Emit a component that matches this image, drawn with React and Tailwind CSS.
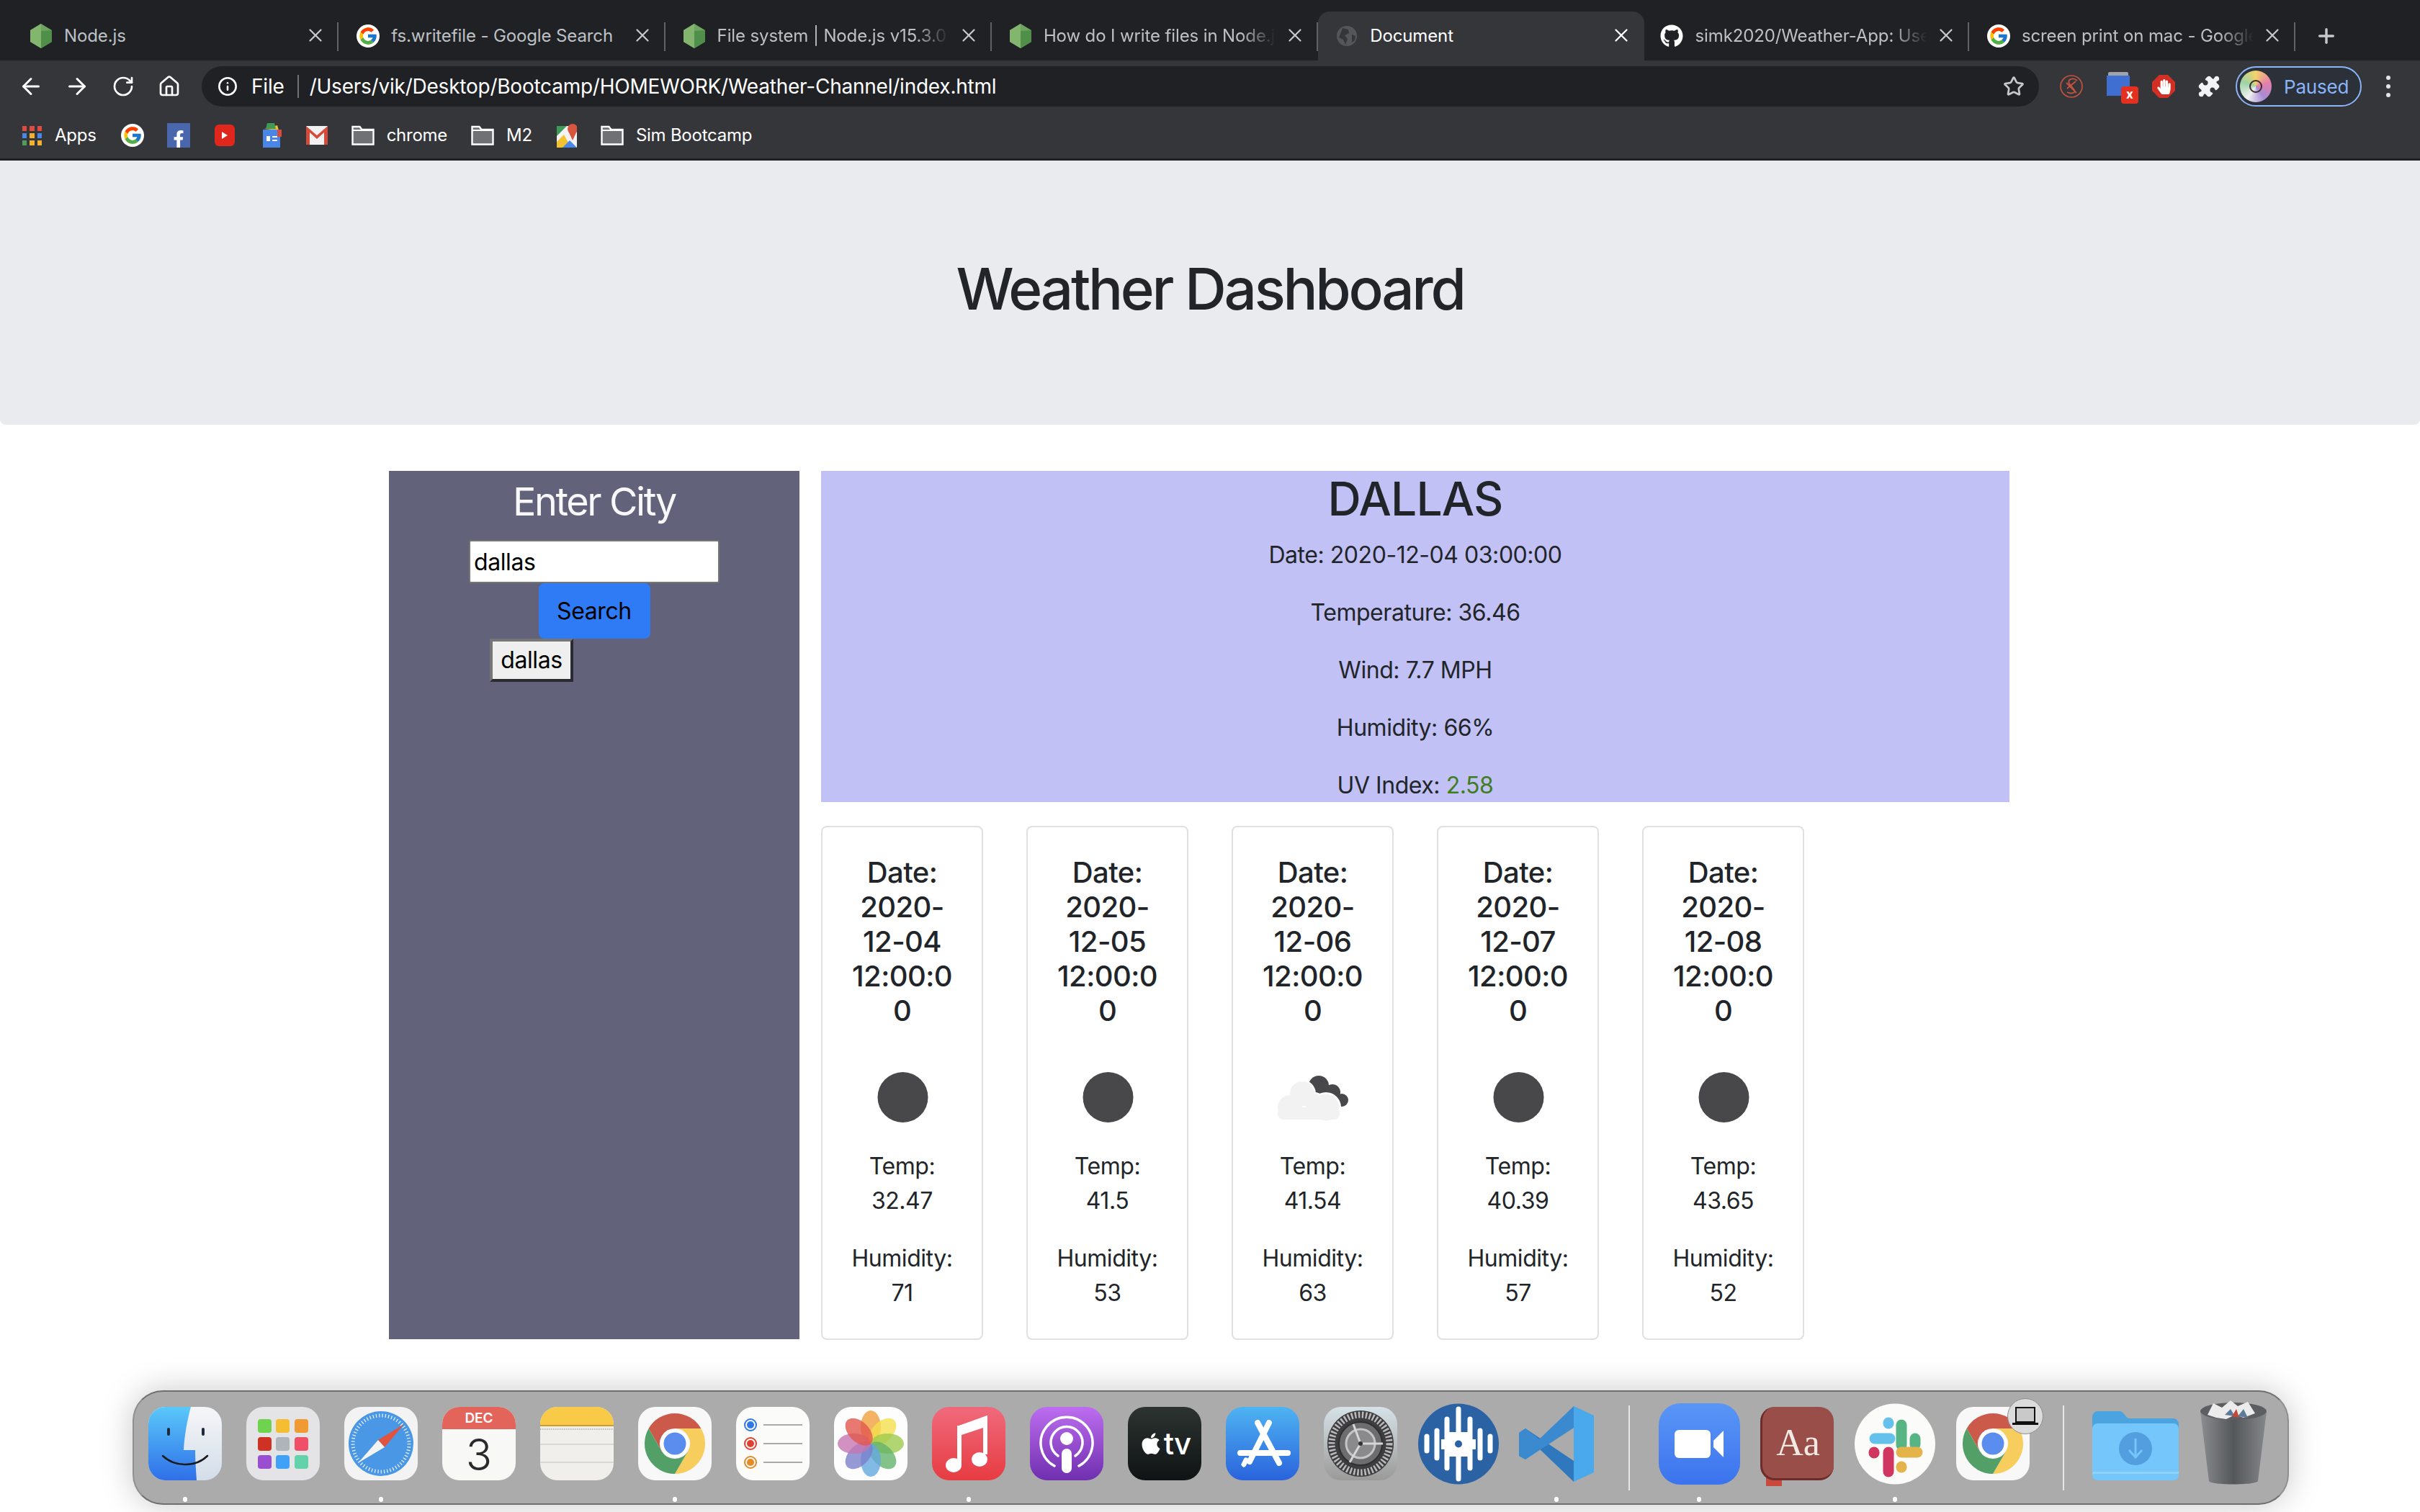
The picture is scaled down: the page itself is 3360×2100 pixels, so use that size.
import { ArrowLeft, ArrowRight, RotateCw, Home, Info, Star, X, Plus, Puzzle } from 'lucide-react';
import { FcGoogle } from 'react-icons/fc';
import { FaGithub, FaFacebookF, FaApple, FaHandPaper } from 'react-icons/fa';

const tabs = [
    { title: 'Node.js', icon: 'node', width: 'w-[453.3px]' },
    { title: 'fs.writefile - Google Search', icon: 'google', width: 'w-[453.3px]' },
    { title: 'File system | Node.js v15.3.0', icon: 'node', fade: true, width: 'w-[453.3px]' },
    { title: 'How do I write files in Node.js', icon: 'node', fade: true, width: 'w-[453.3px]' },
    { title: 'Document', icon: 'globe', active: true, width: 'w-[453.3px]' },
    { title: 'simk2020/Weather-App: Use', icon: 'github', fade: true, width: 'w-[450.4px]' },
    { title: 'screen print on mac - Google', icon: 'google', fade: true, width: 'w-[453.3px]' },
];

const forecast = [
    { date: '12-04', temp: '32.47', humidity: '71' },
    { date: '12-05', temp: '41.5', humidity: '53' },
    { date: '12-06', temp: '41.54', humidity: '63', cloudy: true },
    { date: '12-07', temp: '40.39', humidity: '57' },
    { date: '12-08', temp: '43.65', humidity: '52' },
];

function NodeIcon() {
    return (
        <svg viewBox="0 0 30 34" className="w-[30px] h-[34px] shrink-0">
            <polygon points="15,0 30,9 30,25 15,34 0,25 0,9" fill="#6da55f" />
            <polygon points="15,0 15,34 0,25 0,9" fill="#83b56f" />
            <polygon points="15,10 30,9 30,25 15,34" fill="#4f8f4a" />
        </svg>
    );
}

function GoogleIcon({ inner = 28 }) {
    return (
        <span className="w-[32px] h-[32px] rounded-full bg-white flex items-center justify-center shrink-0">
            <FcGoogle size={inner} />
        </span>
    );
}

function TabIcon({ icon }) {
    if (icon === 'node') return <NodeIcon />;
    if (icon === 'google') return <GoogleIcon />;
    if (icon === 'github') return <FaGithub size={32} className="text-white shrink-0" />;
    return (
        <svg viewBox="0 0 30 30" className="w-[30px] h-[30px] shrink-0">
            <circle cx="15" cy="15" r="14" fill="#54565b" />
            <path d="M9 4l8 2 1 5-6 3 4 5-3 8-3-7-6-3z" fill="#35363a" />
            <path d="M22 13l5 2-1 6-4 3z" fill="#35363a" />
        </svg>
    );
}

function Tab({ title, icon, active, fade, width }) {
    return (
        <div className={`relative ${width} h-[68px] shrink-0 flex items-center ${icon === 'github' ? 'pl-[22px]' : 'pl-[25px]'} text-[24px] ${active ? 'bg-[#35363a] rounded-t-[16px] text-white' : 'text-[#bdc1c6]'}`}>
            <TabIcon icon={icon} />
            <span className={`${icon === 'node' || icon === 'globe' ? 'ml-[17px]' : 'ml-[16px]'} whitespace-nowrap overflow-hidden tracking-[-0.12px] ${fade ? 'w-[322px] [mask-image:linear-gradient(to_right,#000_85%,transparent)]' : ''}`}>{title}</span>
            <X size={30} strokeWidth={1.8} className={`absolute right-[17px] top-[18px] ${active ? 'text-white' : 'text-[#c4c7cc]'}`} />
            {!active && <span className="absolute right-0 top-[15px] w-[2px] h-[40px] bg-[#5f6368]" />}
        </div>
    );
}

function FolderIcon() {
    return (
        <svg viewBox="0 0 32 28" className="w-[32px] h-[28px] shrink-0">
            <path d="M1.5 2h10l3 4h16v20.5h-29z" fill="#6f7175" stroke="#fff" strokeWidth="2.4" />
            <path d="M1.5 7h29" stroke="#fff" strokeWidth="2" />
        </svg>
    );
}

function BookmarksBar() {
    return (
        <div className="h-[72px] pt-[8px] flex items-center pl-[31px] text-[24px] text-white tracking-[-0.25px]">
            <div className="grid grid-cols-3 gap-x-[4px] gap-y-[3px] w-[27px] shrink-0">
                {['bg-[#e04b3f]', 'bg-[#e04b3f]', 'bg-[#e04b3f]', 'bg-[#4a85e8]', 'bg-[#f0b030]', 'bg-[#4a85e8]', 'bg-[#4f9d5d]', 'bg-[#f0b030]', 'bg-[#f0b030]'].map((c, i) => (
                    <span key={i} className={`h-[7px] ${c}`} />
                ))}
            </div>
            <span className="ml-[18px] mr-[34px]">Apps</span>
            <GoogleIcon />
            <span className="ml-[32px] w-[32px] h-[34px] bg-[#4a67ad] flex items-end justify-center shrink-0 text-white"><FaFacebookF size={24} /></span>
            <span className="ml-[34px] w-[28px] h-[30px] rounded-[6px] bg-[#e0271e] flex items-center justify-center shrink-0">
                <span className="w-0 h-0 border-y-[5px] border-y-transparent border-l-[8px] border-l-white" />
            </span>
            <svg viewBox="0 0 30 34" className="ml-[35px] w-[30px] h-[34px] shrink-0">
                <polygon points="6,8 24,3 26,10" fill="#f2c230" />
                <polygon points="10,0 20,0 22,8 8,8" fill="#3f9a55" />
                <rect x="4" y="9" width="24" height="25" fill="#4a85e8" />
                <rect x="24" y="9" width="6" height="10" fill="#d94c3d" />
                <rect x="9" y="18" width="5" height="7" fill="#fff" />
                <rect x="17" y="18" width="7" height="2" fill="#fff" />
                <rect x="17" y="23" width="7" height="2" fill="#fff" />
            </svg>
            <svg viewBox="0 0 30 26" className="ml-[34px] w-[30px] h-[28px] shrink-0">
                <rect width="30" height="26" fill="#f1f1f1" />
                <path d="M0 0l15 13L30 0v26h-5V9L15 18 5 9v17H0z" fill="#d44b3c" />
            </svg>
            <span className="ml-[33px]"><FolderIcon /></span>
            <span className="ml-[17px]">chrome</span>
            <span className="ml-[33px]"><FolderIcon /></span>
            <span className="ml-[17px]">M2</span>
            <svg viewBox="0 0 28 34" className="ml-[34px] w-[28px] h-[34px] shrink-0">
                <rect x="0" y="4" width="28" height="30" fill="#f3f3f3" />
                <polygon points="0,4 14,4 0,18" fill="#3e9a58" />
                <polygon points="0,34 0,26 10,16 20,34" fill="#f2c230" />
                <polygon points="8,34 18,24 28,34" fill="#4a85e8" />
                <circle cx="22" cy="8" r="7" fill="#d9553f" />
                <polygon points="16,11 28,11 22,24" fill="#d9553f" />
            </svg>
            <span className="ml-[33px]"><FolderIcon /></span>
            <span className="ml-[17px]">Sim Bootcamp</span>
        </div>
    );
}

function NavButton({ children }) {
    return <span className="w-[64px] flex items-center justify-center">{children}</span>;
}

function Toolbar() {
    return (
        <div className="h-[64px] flex items-end relative text-white">
            <div className="w-[280px] h-[56px] shrink-0 relative flex items-center pl-[11px]">
                <NavButton><ArrowLeft size={36} strokeWidth={2} /></NavButton>
                <NavButton><ArrowRight size={36} strokeWidth={2} /></NavButton>
                <NavButton><RotateCw size={32} strokeWidth={2} /></NavButton>
                <NavButton><Home size={32} strokeWidth={2} /></NavButton>
            </div>
            <div className="w-[2551px] h-[56px] rounded-full bg-[#202124] flex items-center pl-[22px] text-[28px] shrink-0">
                <Info size={28} strokeWidth={2.2} className="shrink-0" />
                <span className="ml-[19px] tracking-[-0.2px]">File</span>
                <span className="ml-[18px] w-[2px] h-[32px] bg-[#6f7276]" />
                <span className="ml-[15px] tracking-[-0.23px]">/Users/vik/Desktop/Bootcamp/HOMEWORK/Weather-Channel/index.html</span>
                <Star size={30} strokeWidth={2.2} className="ml-auto mr-[20px] text-[#c4c7cc]" />
            </div>
            <div className="h-[56px] flex items-center flex-1 relative">
                <svg viewBox="0 0 32 34" className="ml-[29px] w-[32px] h-[34px] shrink-0">
                    <circle cx="16" cy="17" r="15" fill="none" stroke="#c4533f" strokeWidth="1.6" />
                    <path d="M24 9c-6-5-14-2-11 4l7 9c2 4-4 6-10 3M9 12l14 14M10 20l12-10" fill="none" stroke="#c4533f" strokeWidth="1.8" />
                </svg>
                <div className="ml-[33px] relative w-[32px] h-[40px] shrink-0">
                    <div className="mx-[2px] h-[5px] bg-[#a0a4aa] rounded-t-[2px]" />
                    <div className="h-[28px] bg-[#3f6fd1]" />
                    <span className="absolute left-[20px] top-[20px] w-[24px] h-[24px] rounded-[4px] bg-[#e5301f] flex items-center justify-center text-[17px] font-bold text-white">x</span>
                </div>
                <div className="ml-[31px] relative w-[32px] h-[32px] flex items-center justify-center shrink-0">
                    <svg viewBox="0 0 32 32" className="absolute inset-0 w-[32px] h-[32px]">
                        <polygon points="10,0 22,0 32,10 32,22 22,32 10,32 0,22 0,10" fill="#d32f25" />
                    </svg>
                    <FaHandPaper size={21} className="relative text-white" />
                </div>
                <Puzzle size={34} fill="#f1f3f4" strokeWidth={0} className="ml-[30px] shrink-0" />
                <div className="ml-[20px] w-[175px] h-[56px] rounded-full border-2 border-[#8ab4f8] bg-[#2c3039] flex items-center pl-[4px] shrink-0">
                    <span className="w-[44px] h-[44px] rounded-full bg-[conic-gradient(#f1d36b,#e77fa8,#a78bd6,#f0f0f0,#9dd3a7,#f1d36b)] flex items-center justify-center shrink-0">
                        <span className="w-[18px] h-[18px] rounded-full border-2 border-[#3a2b2b]" />
                    </span>
                    <span className="ml-[17px] text-[26px] text-[#8ab4f8] tracking-[-0.2px]">Paused</span>
                </div>
                <div className="ml-[34px] flex flex-col gap-[6px]">
                    <span className="w-[6px] h-[6px] rounded-full bg-[#e3e5e8]" />
                    <span className="w-[6px] h-[6px] rounded-full bg-[#e3e5e8]" />
                    <span className="w-[6px] h-[6px] rounded-full bg-[#e3e5e8]" />
                </div>
            </div>
        </div>
    );
}

function BrowserChrome() {
    return (
        <div className="bg-[#35363a] h-[223px] border-b-[3px] border-[#202124] shrink-0">
            <div className="bg-[#202124] h-[84px] flex items-end pl-[17px] text-[#c4c7cc]">
                {tabs.map((t) => <Tab key={t.title} {...t} />)}
                <Plus size={32} strokeWidth={2.6} className="ml-[27px] mb-[18px] text-[#c4c7cc]" />
            </div>
            <Toolbar />
            <BookmarksBar />
        </div>
    );
}

function WeatherIcon({ cloudy }) {
    if (cloudy) {
        return (
            <svg viewBox="0 0 100 100" className="w-[100px] h-[100px] mx-auto">
                <g fill="#48484a">
                    <circle cx="58" cy="34" r="14" />
                    <circle cx="77" cy="43" r="11" />
                    <circle cx="90" cy="54" r="9" />
                    <circle cx="74" cy="50" r="12" />
                </g>
                <g fill="#fff">
                    <circle cx="35" cy="45" r="19" />
                    <circle cx="52" cy="58" r="15" />
                    <circle cx="68" cy="64" r="21" />
                </g>
                <g fill="#f1f2f1">
                    <circle cx="35" cy="45" r="17" />
                    <circle cx="18" cy="64" r="17" />
                    <circle cx="52" cy="58" r="13" />
                    <circle cx="68" cy="64" r="18.5" />
                    <rect x="1" y="64" width="86" height="17" rx="8" />
                </g>
            </svg>
        );
    }
    return (
        <svg viewBox="0 0 100 100" className="w-[100px] h-[100px] mx-auto">
            <circle cx="50.5" cy="50" r="35" fill="#48484a" />
        </svg>
    );
}

function ForecastCard({ date, temp, humidity, cloudy }) {
    return (
        <div className="w-[225px] h-[714px] shrink-0 border-2 border-[#e0e0e0] rounded-[8px] pt-[39px] px-[20px] text-center text-[#212529]">
            <div className="text-[40px] leading-[48px] font-medium tracking-[-0.6px]">
                <div>Date:</div>
                <div>2020-</div>
                <div>{date}</div>
                <div>12:00:0</div>
                <div>0</div>
            </div>
            <div className="mt-[46px] mb-[22px]"><WeatherIcon cloudy={cloudy} /></div>
            <div className="text-[32px] leading-[48px] tracking-[-0.45px]">
                <div>Temp:</div>
                <div>{temp}</div>
                <div className="mt-[32px]">Humidity:</div>
                <div>{humidity}</div>
            </div>
        </div>
    );
}

function Sidebar() {
    return (
        <aside className="w-[570px] h-[1206px] bg-[#62637a] shrink-0 flex flex-col items-center">
            <h3 className="mt-[9px] text-[54px] leading-[67px] font-normal text-[#f8f8fb] tracking-[-2.4px]">Enter City</h3>
            <input
                defaultValue="dallas"
                className="mt-[20px] w-[348px] h-[60px] bg-white border-2 border-[#767676] rounded-[3px] pl-[5px] text-[32px] text-black tracking-[-0.4px] outline-none"
            />
            <button className="w-[155px] h-[77px] bg-[#2f7bf5] rounded-[8px] text-[32px] text-black tracking-[-0.4px]">Search</button>
            <button className="self-start ml-[140px] w-[116px] h-[60px] bg-[#efefef] border-4 border-t-[#767676] border-l-[#767676] border-r-[#2b2a33] border-b-[#2b2a33] text-[32px] text-black tracking-[-0.4px]">dallas</button>
        </aside>
    );
}

function CurrentWeather() {
    const rows = ['Date: 2020-12-04 03:00:00', 'Temperature: 36.46', 'Wind: 7.7 MPH', 'Humidity: 66%'];
    return (
        <section className="w-[1650px] h-[460px] bg-[#c1c1f5] text-center text-[#212529]">
            <h2 className="mb-[16px] text-[64px] leading-[77px] font-medium tracking-[-0.8px]">DALLAS</h2>
            <div className="text-[32px] leading-[48px] tracking-[-0.45px] flex flex-col gap-[32px]">
                {rows.map((r) => <p key={r}>{r}</p>)}
                <p>UV Index: <span className="text-[#3f7d20]">2.58</span></p>
            </div>
        </section>
    );
}

function Finder() {
    return (
        <svg viewBox="0 0 102 102" className="w-[102px] h-[102px]">
            <defs>
                <linearGradient id="fb" x1="0" y1="0" x2="0" y2="1"><stop offset="0" stopColor="#5ac8fa" /><stop offset="1" stopColor="#2f6fe8" /></linearGradient>
                <linearGradient id="fw" x1="0" y1="0" x2="0" y2="1"><stop offset="0" stopColor="#f5f6f8" /><stop offset="1" stopColor="#d3dde9" /></linearGradient>
            </defs>
            <rect width="102" height="102" rx="24" fill="url(#fw)" />
            <path d="M24 0h35c-5 18-9 40-10 60h16c0 14 1 28 2 42H24A24 24 0 0 1 0 78V24A24 24 0 0 1 24 0z" fill="url(#fb)" />
            <rect x="26" y="29" width="4" height="11" rx="2" fill="#1f2a3a" />
            <rect x="74" y="29" width="4" height="11" rx="2" fill="#1f2a3a" />
            <path d="M20 68c17 16 46 16 62 0" fill="none" stroke="#1b1b1f" strokeWidth="2.5" strokeLinecap="round" />
        </svg>
    );
}

function Launchpad() {
    const colors = ['#6fd34f', '#f5bd32', '#ef9a32', '#cf3122', '#aeb4ba', '#ef5068', '#9a4fd0', '#3fa2f7', '#63d2ab'];
    return (
        <div className="w-[102px] h-[102px] rounded-[24px] bg-[#e4e4e6] grid grid-cols-3 gap-[6px] p-[16px] content-center">
            {colors.map((c, i) => (
                <svg key={i} viewBox="0 0 20 20" className="w-[19px] h-[19px]"><rect width="20" height="20" rx="4" fill={c} /></svg>
            ))}
        </div>
    );
}

function Safari() {
    return (
        <svg viewBox="0 0 102 102" className="w-[102px] h-[102px]">
            <rect width="102" height="102" rx="24" fill="#f3f3f4" />
            <circle cx="51" cy="51" r="45" fill="#4a97e6" />
            <circle cx="51" cy="51" r="39" fill="none" stroke="#fff" strokeWidth="5" strokeDasharray="1.3 3" opacity="0.85" />
            <polygon points="47,46 56,56 83,24" fill="#e2533f" />
            <polygon points="47,46 56,56 19,78" fill="#f4f4f4" />
        </svg>
    );
}

function Calendar() {
    return (
        <div className="w-[102px] h-[102px] rounded-[24px] bg-[#f8f8f6] overflow-hidden flex flex-col items-center">
            <div className="w-full h-[31px] bg-[#e3645a] text-white text-[19px] font-semibold text-center leading-[31px]">DEC</div>
            <div className="text-[60px] leading-[70px] font-light text-[#2a2a2c]">3</div>
        </div>
    );
}

function Notes() {
    return (
        <svg viewBox="0 0 102 102" className="w-[102px] h-[102px]">
            <rect width="102" height="102" rx="24" fill="#f1efeb" />
            <path d="M0 26V24A24 24 0 0 1 24 0h54a24 24 0 0 1 24 24v2z" fill="#f8ca48" />
            <path d="M0 26h102" stroke="#c99d33" strokeWidth="2" />
            <path d="M0 31h102" stroke="#bbb" strokeWidth="2" strokeDasharray="1.5 1.5" />
            <path d="M0 52h102M0 77h102" stroke="#d9d8d4" strokeWidth="2" />
        </svg>
    );
}

function Chrome() {
    return (
        <svg viewBox="0 0 102 102" className="w-[102px] h-[102px]">
            <rect width="102" height="102" rx="24" fill="#f8f8f8" />
            <path d="M51 9A42 42 0 0 1 87.4 30H51A21 21 0 0 0 32.8 61.5L14.6 30A42 42 0 0 1 51 9z" fill="#cc5a4a" />
            <path d="M87.4 30A42 42 0 0 1 51 93L69.2 61.5A21 21 0 0 0 51 30z" fill="#f7cd5e" />
            <path d="M14.6 30A42 42 0 0 0 51 93L69.2 61.5A21 21 0 0 1 32.8 61.5z" fill="#52a067" />
            <circle cx="51" cy="51" r="19" fill="#fff" />
            <circle cx="51" cy="51" r="15.5" fill="#5b8dee" />
        </svg>
    );
}

function Reminders() {
    const rows = [['#2f78e8', 25], ['#e0402f', 51], ['#e58a25', 77]];
    return (
        <svg viewBox="0 0 102 102" className="w-[102px] h-[102px]">
            <rect width="102" height="102" rx="24" fill="#fbfbfa" />
            {rows.map(([c, y]) => (
                <g key={y}>
                    <circle cx="20" cy={y} r="8" fill="none" stroke={c} strokeWidth="2" />
                    <circle cx="20" cy={y} r="5" fill={c} />
                    <rect x="38" y={y - 1} width="54" height="2" fill="#aaa" />
                </g>
            ))}
        </svg>
    );
}

function Photos() {
    const petals = [['#f0a03e', 0], ['#f5de4d', 45], ['#9ecb4e', 90], ['#64b36a', 135], ['#64a9df', 180], ['#7b7fc9', 225], ['#c676b1', 270], ['#e2574c', 315]];
    return (
        <svg viewBox="0 0 102 102" className="w-[102px] h-[102px]">
            <rect width="102" height="102" rx="24" fill="#fdfdfd" />
            {petals.map(([c, a]) => (
                <ellipse key={a} cx="51" cy="28" rx="14" ry="23" fill={c} opacity="0.8" transform={`rotate(${a} 51 51)`} />
            ))}
        </svg>
    );
}

function Music() {
    return (
        <svg viewBox="0 0 102 102" className="w-[102px] h-[102px]">
            <defs><linearGradient id="mu" x1="0" y1="0" x2="0" y2="1"><stop offset="0" stopColor="#f06a7c" /><stop offset="1" stopColor="#e73c42" /></linearGradient></defs>
            <rect width="102" height="102" rx="24" fill="url(#mu)" />
            <path d="M38 29l36-13v50" fill="none" stroke="#fff" strokeWidth="6" />
            <path d="M38 26v56" stroke="#fff" strokeWidth="6" />
            <path d="M38 26l36-12v14l-36 12z" fill="#fff" />
            <ellipse cx="30" cy="81" rx="11" ry="10" fill="#fff" />
            <ellipse cx="66" cy="73" rx="11" ry="10" fill="#fff" />
        </svg>
    );
}

function Podcasts() {
    return (
        <svg viewBox="0 0 102 102" className="w-[102px] h-[102px]">
            <defs><linearGradient id="po" x1="0" y1="0" x2="0" y2="1"><stop offset="0" stopColor="#bd6df0" /><stop offset="1" stopColor="#6f2fae" /></linearGradient></defs>
            <rect width="102" height="102" rx="24" fill="url(#po)" />
            <path d="M34 82a36 36 0 1 1 34 0M39 68a22 22 0 1 1 24 0" fill="none" stroke="#fff" strokeWidth="3.5" strokeLinecap="round" />
            <circle cx="51" cy="44" r="9" fill="#fff" />
            <rect x="44" y="58" width="14" height="34" rx="7" fill="#fff" />
        </svg>
    );
}

function AppleTv() {
    return (
        <div className="w-[102px] h-[102px] rounded-[24px] bg-[linear-gradient(#2c3330,#0f1314)] flex items-center justify-center text-white">
            <FaApple size={34} />
            <span className="text-[42px] leading-none font-medium tracking-[-1px] ml-[1px]">tv</span>
        </div>
    );
}

function AppStore() {
    return (
        <svg viewBox="0 0 102 102" className="w-[102px] h-[102px]">
            <defs><linearGradient id="as" x1="0" y1="0" x2="0" y2="1"><stop offset="0" stopColor="#4eb3f2" /><stop offset="1" stopColor="#2a63dc" /></linearGradient></defs>
            <rect width="102" height="102" rx="24" fill="url(#as)" />
            <path d="M60 22L33 76M44 22L74 78M20 64h66" stroke="#fff" strokeWidth="8" strokeLinecap="round" />
            <path d="M28 74l-3 6" stroke="#fff" strokeWidth="7" strokeLinecap="round" />
        </svg>
    );
}

function SystemPrefs() {
    return (
        <svg viewBox="0 0 102 102" className="w-[102px] h-[102px]">
            <defs><linearGradient id="sp" x1="0" y1="0" x2="0" y2="1"><stop offset="0" stopColor="#d6e2e8" /><stop offset="1" stopColor="#9a9a98" /></linearGradient></defs>
            <rect width="102" height="102" rx="24" fill="url(#sp)" />
            <circle cx="51" cy="51" r="46" fill="#3d3d3f" />
            <circle cx="51" cy="51" r="40" fill="none" stroke="#b9b9bb" strokeWidth="9" strokeDasharray="2.5 2.5" />
            <circle cx="51" cy="51" r="30" fill="#6d6d70" stroke="#2f2f31" strokeWidth="2" />
            <circle cx="51" cy="51" r="20" fill="#8a8a8d" stroke="#c5c5c7" strokeWidth="3" />
            <path d="M51 51L41 24M51 51H82M51 51L36 77" stroke="#d6d6d8" strokeWidth="3" />
            <circle cx="51" cy="51" r="3" fill="#333" />
        </svg>
    );
}

function SoundCircle() {
    return (
        <svg viewBox="0 0 112 113" className="w-[112px] h-[113px] shrink-0">
            <circle cx="56" cy="56.5" r="56" fill="#2a62a3" />
            <path d="M42 40h28v10h10v14H70v10H42V64H32V50h10z" fill="#fff" />
            {[[12, 46, 66], [26, 38, 76], [40, 22, 90], [56, 8, 105], [72, 22, 90], [86, 38, 76], [100, 46, 66]].map(([x, a, b]) => (
                <path key={x} d={`M${x} ${a}V${b}`} stroke="#fff" strokeWidth="7" strokeLinecap="round" />
            ))}
            <circle cx="56" cy="56.5" r="5" fill="#2a62a3" />
        </svg>
    );
}

function VSCode() {
    return (
        <svg viewBox="0 0 112 113" className="w-[112px] h-[113px] shrink-0">
            <path d="M4 41l9-6 67 45v29L32 63 13 78 4 73z" fill="#2f78bd" />
            <path d="M4 73l9 5 67-44V4L32 50 13 35 4 41z" fill="#3b8ad0" />
            <path d="M80 4l28 13v79L80 109V80l0-46z" fill="#4aa8ec" />
        </svg>
    );
}

function Zoom() {
    return (
        <svg viewBox="0 0 113 113" className="w-[113px] h-[113px] shrink-0">
            <defs><linearGradient id="zo" x1="0" y1="0" x2="0" y2="1"><stop offset="0" stopColor="#5a96f7" /><stop offset="1" stopColor="#3c73ee" /></linearGradient></defs>
            <rect width="113" height="113" rx="30" fill="url(#zo)" />
            <rect x="22" y="37" width="50" height="39" rx="6" fill="#fff" />
            <path d="M76 52l14-14v37L76 61z" fill="#fff" />
        </svg>
    );
}

function Dictionary() {
    return (
        <div className="relative w-[102px] h-[102px] overflow-visible">
            <span className="absolute left-[8px] bottom-[-8px] w-[22px] h-[20px] bg-[#c74a3c]" />
            <div className="relative w-full h-full rounded-[20px] bg-[#9a4e49] border-l-[3px] border-b-[3px] border-[#6b2c2a] flex items-center justify-center text-[#f2e9e3] text-[52px] font-['Liberation_Serif',serif]">Aa</div>
        </div>
    );
}

function Slack() {
    return (
        <svg viewBox="0 0 112 113" className="w-[112px] h-[113px] shrink-0">
            <circle cx="56" cy="56.5" r="56" fill="#fbfbfa" />
            <g strokeLinecap="round" strokeWidth="15" fill="none">
                <path d="M65 30v28" stroke="#57b585" />
                <path d="M84 49v8" stroke="#57b585" />
                <path d="M28 49h21" stroke="#63c1ec" />
                <path d="M47 27v1" stroke="#63c1ec" />
                <path d="M47 68v27" stroke="#d0365f" />
                <path d="M27 68v1" stroke="#d0365f" />
                <path d="M65 68h22" stroke="#e4b44a" />
                <path d="M65 88v1" stroke="#e4b44a" />
            </g>
        </svg>
    );
}

function ChromeRemote() {
    return (
        <div className="relative w-[102px] h-[102px]">
            <Chrome />
            <div className="absolute left-[71px] top-[-12px] w-[50px] h-[50px] rounded-full bg-[#dcdcdc] border border-[#8e8e8e] flex items-center justify-center">
                <svg viewBox="0 0 36 28" className="w-[36px] h-[28px]">
                    <rect x="5" y="2" width="26" height="20" fill="#c9c9c9" stroke="#111" strokeWidth="2" />
                    <rect x="0" y="23" width="36" height="3" fill="#111" />
                </svg>
            </div>
        </div>
    );
}

function DownloadsFolder() {
    return (
        <svg viewBox="0 0 120 102" className="w-[120px] h-[102px] shrink-0">
            <path d="M0 14a8 8 0 0 1 8-8h30c6 0 8 10 14 10h60a8 8 0 0 1 8 8v70a8 8 0 0 1-8 8H8a8 8 0 0 1-8-8z" fill="#4ba3e0" />
            <rect x="0" y="23" width="120" height="79" rx="7" fill="#75c6fb" />
            <rect x="0" y="90" width="120" height="3" fill="#8fd2fb" />
            <ellipse cx="60" cy="58" rx="23" ry="23" fill="#539ede" />
            <path d="M60 44v26M51 60l9 10 9-10" fill="none" stroke="#75c6fb" strokeWidth="3" />
        </svg>
    );
}

function Trash() {
    return (
        <svg viewBox="0 0 92 120" className="w-[92px] h-[120px] shrink-0">
            <defs><linearGradient id="tr" x1="0" y1="0" x2="1" y2="0"><stop offset="0" stopColor="#8b8d8f" /><stop offset="0.5" stopColor="#54575a" /><stop offset="1" stopColor="#85878a" /></linearGradient></defs>
            <path d="M0 15L12 112c1 6 66 6 68 0L92 15z" fill="url(#tr)" />
            <ellipse cx="46" cy="15" rx="46" ry="12" fill="#5c5e61" />
            <path d="M10 20l8-16 12 6 12-10 10 8 14-6 10 16-16 6-12-4-12 6-14-2z" fill="#ececec" />
            <path d="M34 20l8-8 6 10zM52 22l8-10 6 12z" fill="#5d7a99" />
            <path d="M44 22l6-10 4 12z" fill="#bf4a3a" />
        </svg>
    );
}

function Slot({ dot, children }) {
    return (
        <div className="relative w-[102px] h-[102px] shrink-0 flex items-center justify-center">
            {children}
            {dot && <span className="absolute left-[48px] top-[125px] w-[6px] h-[7px] rounded-full bg-white" />}
        </div>
    );
}

function Dock() {
    return (
        <div className="absolute left-[184px] top-[1931px] w-[2994px] h-[159px] rounded-[42px] bg-[#ababab] border-2 border-t-[#6f6f6f] border-b-[#6f6f6f] border-x-[#8f8f8f] shadow-[0_0_45px_rgba(0,0,0,0.22)] flex pl-[20px] pt-[21px] text-[#212529]">
            <div className="flex gap-[34px]">
                <Slot dot><Finder /></Slot>
                <Slot><Launchpad /></Slot>
                <Slot dot><Safari /></Slot>
                <Slot><Calendar /></Slot>
                <Slot><Notes /></Slot>
                <Slot dot><Chrome /></Slot>
                <Slot><Reminders /></Slot>
                <Slot><Photos /></Slot>
                <Slot dot><Music /></Slot>
                <Slot><Podcasts /></Slot>
                <Slot><AppleTv /></Slot>
                <Slot><AppStore /></Slot>
                <Slot><SystemPrefs /></Slot>
                <Slot><SoundCircle /></Slot>
                <Slot dot><VSCode /></Slot>
            </div>
            <span className="ml-[49px] mt-[-2px] w-[2px] h-[118px] bg-[#e6e6e6]" />
            <div className="ml-[45px] flex gap-[34px]">
                <Slot dot><Zoom /></Slot>
                <Slot><Dictionary /></Slot>
                <Slot dot><Slack /></Slot>
                <Slot><ChromeRemote /></Slot>
            </div>
            <span className="ml-[46px] mt-[-2px] w-[2px] h-[118px] bg-[#e6e6e6]" />
            <div className="ml-[48px] flex gap-[34px]">
                <Slot><DownloadsFolder /></Slot>
                <Slot><Trash /></Slot>
            </div>
        </div>
    );
}

export default function App() {
    return (
        <div className="relative w-[3360px] h-[2100px] overflow-hidden bg-white font-['Inter',sans-serif] flex flex-col">
            <BrowserChrome />
            <header className="h-[367px] pb-[12px] bg-[#e9ebef] rounded-b-[8px] flex items-center justify-center shrink-0">
                <h1 className="text-[80px] font-medium text-[#212529] tracking-[-3.3px]">Weather Dashboard</h1>
            </header>
            <main className="mt-[64px] pl-[540px] flex gap-[30px]">
                <Sidebar />
                <div>
                    <CurrentWeather />
                    <div className="mt-[33px] flex gap-[60px]">
                        {forecast.map((f) => <ForecastCard key={f.date} {...f} />)}
                    </div>
                </div>
            </main>
            <Dock />
        </div>
    );
}
